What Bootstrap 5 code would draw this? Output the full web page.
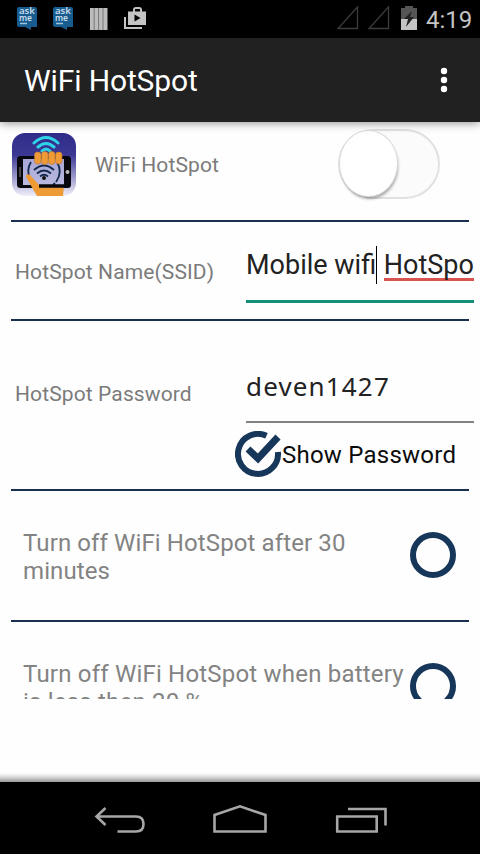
<!DOCTYPE html>
<html lang="en">
<head>
<meta charset="utf-8">
<meta name="viewport" content="width=device-width, initial-scale=1">
<title>WiFi HotSpot</title>
<link href="https://cdn.jsdelivr.net/npm/bootstrap@5.3.0/dist/css/bootstrap.min.css" rel="stylesheet">
<style>
body{width:480px;height:854px;overflow:hidden;font-family:Roboto,"Noto Sans",sans-serif;background:#fefefe;color:#222}
svg{display:block;flex:none}
.statusbar{height:38px;background:#000;padding:0 9px 0 16px}
.clock{font-size:24px;line-height:40px;color:#c4c4c4;width:45px;white-space:nowrap}
.appbar{height:84px;background:#212121;padding:2px 32px 0 24px;position:relative;z-index:2;box-shadow:0 1px 9px rgba(0,0,0,.45)}
.app-title{font-size:30px;line-height:40px;color:#fff;font-weight:400;letter-spacing:-.12px}
.settings{height:577px;overflow:hidden}
.setting{margin:0 11px;border-bottom:2px solid #18304f}
.r-switch{height:100px;padding:7px 29px 0 1px}
.r-ssid{height:99px}
.r-pass{height:170px}
.r-timer{height:131px}
.lbl{font-size:21px;line-height:28px;color:#7b7b7b;white-space:nowrap;letter-spacing:.12px}
.l-main{margin-left:19px;padding-top:22px}
.l-ssid{width:235px;padding:36px 0 0 4px}
.l-pass{width:235px;padding:59px 0 0 4px}
.l-wrap{font-size:24px;line-height:28px;color:#838383;padding:38px 0 0 12px;white-space:nowrap;letter-spacing:.11px}
.l-battery{letter-spacing:.2px}
.field{width:228px;margin-right:-5px;white-space:nowrap;font-size:27px;color:#222}
.f-ssid{height:81px;padding-top:25px;line-height:36px;border-bottom:3px solid #159078}
.misspelt{display:inline-block;height:34px;border-bottom:3px solid #d9534f;vertical-align:top;margin-left:1px}
.caret{display:inline-block;width:1px;height:38px;background:#000;vertical-align:top;margin:-1px -1px 0 0}
.f-pass{height:102px;padding-top:47px;line-height:36px;border-bottom:2px solid #828282;font-family:"Noto Sans","Open Sans",sans-serif;font-size:26px;letter-spacing:1.15px}
.show-pass{margin-left:-11px;padding-top:8px}
.show-pass span{font-size:24px;line-height:48px;color:#0c0c0c;letter-spacing:.23px}
.toggle-off{width:102px;height:70px;border:2px solid #e1e1e1;border-radius:35px;background:#fbfbfb}
.knob{width:57px;height:65px;border-radius:50%;background:#fff;box-shadow:0 0 0 1px #ddd,1px 3px 3px rgba(0,0,0,.35)}
.ring{width:46px;height:46px;border:6px solid #16365a;border-radius:50%;margin:41px 13px 0 0;flex:none}
.blank{height:83px;background:linear-gradient(#fefefe 0,#fefefe 74px,#e4e4e4 77px,#999 83px)}
.navkeys{height:72px;background:#000;padding:0 92px 0 94px}
</style>
<script src="https://cdn.jsdelivr.net/npm/bootstrap@5.3.0/dist/js/bootstrap.bundle.min.js"></script>
</head>
<body class="d-flex flex-column">
<header class="statusbar d-flex justify-content-between">
  <svg width="134" height="38" viewBox="16 0 134 38" font-family="Noto Sans, sans-serif" font-weight="600" fill="#c9dcea">
    <g id="ask"><path d="M17 9q0-2 2-2h16q2 0 2 2v18h-6v3l-6-3h-6q-2 0-2-2z" fill="#175b8f"/>
    <text x="19" y="14" font-size="9" textLength="16" lengthAdjust="spacingAndGlyphs">ask</text>
    <text x="19" y="20.500" font-size="9" textLength="13" lengthAdjust="spacingAndGlyphs">me</text>
    <path d="M20 23.500h7" stroke="#9fc4dc" stroke-width="1.500"/></g>
    <use href="#ask" x="36"/>
    <g fill="#bcbcbc"><path d="M90 8h17.500v22H90z"/></g>
    <path d="M94.200 8v22M98.600 8v22M103 8v22" stroke="#777" stroke-width="1"/>
    <path d="M125 17v11h17" fill="none" stroke="#c4c4c4" stroke-width="2"/>
    <path d="M128 11.500h5V10q0-3 3-3h3q3 0 3 3v1.500h4V25h-18zM135 11.500h5V9h-5zM134.500 14.500v7l6-3.500z" fill="#c4c4c4" fill-rule="evenodd"/>
  </svg>
  <div class="d-flex">
    <svg width="89" height="38" viewBox="337 0 89 38" fill="none">
      <path d="M338 28.500h19.500V7zM369 28.500h19.500V7z" stroke="#3c3c3c" stroke-width="1.300"/>
      <path d="M401 8h4V6h8v2h4v11h-16z" fill="#555"/><path d="M401 19h16v11h-16z" fill="#c4c4c4"/>
      <path d="M412 11l-8 8h4l-2 8 8-10h-4z" fill="#222"/>
    </svg>
    <div class="clock">4:19</div>
  </div>
</header>
<nav class="appbar d-flex align-items-center justify-content-between">
  <h1 class="app-title m-0">WiFi HotSpot</h1>
  <svg width="8" height="28" viewBox="0 0 8 28" fill="#fff"><circle cx="4" cy="4" r="3.200"/><circle cx="4" cy="13" r="3.200"/><circle cx="4" cy="22" r="3.200"/></svg>
</nav>
<main class="settings flex-shrink-0">
  <section class="setting r-switch d-flex align-items-start">
    <svg class="mt-1" width="64" height="64" viewBox="0 1 64 64" fill="none">
      <defs><linearGradient id="bg" x2="0" y2="1"><stop stop-color="#2f2b88"/><stop offset=".35" stop-color="#3b3894"/><stop offset="1" stop-color="#f0effa"/></linearGradient>
      <linearGradient id="scr" x2="0" y2="1"><stop stop-color="#a9a7d6"/><stop offset="1" stop-color="#b9b9e0"/></linearGradient></defs>
      <rect y="1" width="64" height="63" rx="13" fill="url(#bg)"/>
      <g stroke="#2ed3e8" stroke-linecap="round" stroke-width="3"><path d="M22 11q12-11 24 0M26 15q8-7 16 0M30 19q4-4 8 0"/></g>
      <rect x="5" y="24" width="54" height="32" rx="3.500" fill="#07070d"/>
      <rect x="11" y="27" width="41" height="26" fill="url(#scr)"/>
      <path d="M8 35v10" stroke="#888" stroke-width="1"/><circle cx="55.500" cy="40" r="2" fill="#bbb"/>
      <g stroke="#132a4e" stroke-width="1.800"><path d="M19 30q-5 8-1 17M45 30q6 10-1 20M41 53l2-2"/><path d="M22 38q10-9 20 0M25 41.500q7-6 14 0M28 44.500q4-3.500 8 0"/></g>
      <circle cx="32" cy="46" r="2" fill="#111"/>
      <path d="M14 45q0-4 4-2l10 11h24l-1 10H25z" fill="#ee9a35"/>
      <path d="M27 54h25" stroke="#07070d" stroke-width="3.500"/>
      <g fill="#ee9a35" stroke="#b87537" stroke-width=".6"><rect x="22.500" y="20" width="6.500" height="12" rx="3"/><rect x="29.500" y="19.500" width="6.500" height="13" rx="3"/><rect x="36.500" y="19.500" width="6.500" height="13" rx="3"/><rect x="43.500" y="20" width="6.500" height="12" rx="3"/></g>
    </svg>
    <span class="lbl l-main">WiFi HotSpot</span>
    <div class="toggle-off ms-auto"><div class="knob"></div></div>
  </section>
  <section class="setting r-ssid d-flex">
    <label class="lbl l-ssid">HotSpot Name(SSID)</label>
    <div class="field f-ssid">Mobile wifi<i class="caret"></i> <span class="misspelt">HotSpo</span></div>
  </section>
  <section class="setting r-pass d-flex">
    <label class="lbl l-pass">HotSpot Password</label>
    <div>
      <div class="field f-pass">deven1427</div>
      <div class="show-pass d-flex align-items-center">
        <svg width="47" height="48" viewBox="0 1 47 48" fill="none" stroke="#16365a" stroke-width="6"><path d="M31.500 5.800A20 20 0 1 0 42.900 22"/><path d="M13 19l10 9.500L43 7" stroke-width="7"/></svg>
        <span>Show Password</span>
      </div>
    </div>
  </section>
  <section class="setting r-timer d-flex justify-content-between">
    <div class="l-wrap">Turn off WiFi HotSpot after 30<br>minutes</div>
    <div class="ring" role="checkbox" aria-checked="false"></div>
  </section>
  <section class="setting r-timer d-flex justify-content-between">
    <div class="l-wrap l-battery">Turn off WiFi HotSpot when battery<br>is less then 20 %</div>
    <div class="ring" role="checkbox" aria-checked="false"></div>
  </section>
</main>
<div class="blank flex-shrink-0"></div>
<footer class="navkeys d-flex justify-content-between align-items-start flex-shrink-0">
  <svg width="52" height="72" viewBox="94 782 52 72" fill="none" stroke="#a6a6a6" stroke-width="2.600"><path d="M105.500 808l-9 8.500 9 8.500M97 816.500h39q7.500 0 7.500 7.500t-7.500 7.500H117.500"/></svg>
  <svg width="56" height="72" viewBox="212 782 56 72" fill="none" stroke="#a6a6a6" stroke-width="2.600"><path d="M214.500 831.500V815L240 806.300l25.500 8.700v16.500z"/></svg>
  <svg width="54" height="72" viewBox="334 782 54 72" fill="none" stroke="#a6a6a6" stroke-width="2.600"><path d="M337.200 816.500h39.500v15h-39.500zM348 809h37.500v16.500"/></svg>
</footer>
</body>
</html>
